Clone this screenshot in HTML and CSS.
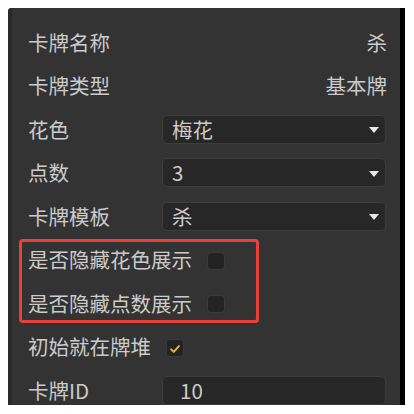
FILE: index.html
```html
<!DOCTYPE html>
<html lang="zh-CN">
<head>
  <meta charset="UTF-8">
  <meta name="viewport" content="width=device-width, initial-scale=1.0">
  <title>卡牌属性</title>
  <link rel="stylesheet" href="styles.css">
</head>
<body>
  <div class="panel">
    <div class="rows">
      <div class="row">
        <div class="row-label">卡牌名称</div>
        <div class="row-value">杀</div>
      </div>
      <div class="row">
        <div class="row-label">卡牌类型</div>
        <div class="row-value">基本牌</div>
      </div>
      <div class="row">
        <div class="row-label field-label">花色</div>
        <div class="select">梅花<span class="select-arrow"></span></div>
      </div>
      <div class="row">
        <div class="row-label field-label">点数</div>
        <div class="select">3<span class="select-arrow"></span></div>
      </div>
      <div class="row">
        <div class="row-label field-label">卡牌模板</div>
        <div class="select">杀<span class="select-arrow"></span></div>
      </div>

      <div class="highlight">
        <div class="row check-row">
          <div class="row-label">是否隐藏花色展示</div>
          <span class="checkbox"></span>
        </div>
        <div class="row check-row">
          <div class="row-label">是否隐藏点数展示</div>
          <span class="checkbox"></span>
        </div>
      </div>

      <div class="row check-row">
        <div class="row-label">初始就在牌堆</div>
        <span class="checkbox checked">
          <svg viewBox="0 0 18 18" width="18" height="18">
            <path d="M4.6 9.4 L7.6 12.2 L13.4 5.8" fill="none" stroke="#f2b32c" stroke-width="2.2" stroke-linecap="round" stroke-linejoin="round"/>
          </svg>
        </span>
      </div>
      <div class="row">
        <div class="row-label field-label">卡牌ID</div>
        <div class="input">10</div>
      </div>
    </div>
  </div>
</body>
</html>
```

FILE: styles.css
```css
body {
  margin: 0;
  padding: 0;
  background-color: #fff;
  font-family: "Noto Sans CJK SC", "Noto Sans", sans-serif;
  color: #cbcbcb;
}

.panel {
  margin: 8px 0 0 8px;
  width: 388px;
  height: 397px;
  background-color: #333;
  border-left: 4px solid #2a2a2a;
  border-right: 5px solid #000;
  border-top-left-radius: 3px;
  overflow: hidden;
}

.rows {
  display: flex;
  flex-direction: column;
  gap: 14.5px;
  padding: 19.5px 13px 0 16px;
}

.row {
  display: flex;
  align-items: center;
  height: 29px;
  font-size: 20.5px;
  line-height: 29px;
}

.row-label {
  white-space: nowrap;
}

.field-label {
  width: 134px;
  flex-shrink: 0;
}

.row-value {
  margin-left: auto;
}

.select,
.input {
  flex: 1;
  height: 29px;
  box-sizing: border-box;
  margin-right: 1px;
  background-color: #272727;
  border: 1px solid #3d3d3d;
  border-radius: 5px;
  padding-left: 9px;
  display: flex;
  align-items: center;
  font-size: 20.5px;
  color: #cbcbcb;
}

.input {
  padding-left: 17px;
}

.select-arrow {
  margin-left: auto;
  margin-right: 6px;
  width: 0;
  height: 0;
  border-left: 5px solid transparent;
  border-right: 5px solid transparent;
  border-top: 6px solid #e8e8e8;
  margin-top: 2px;
}

.check-row {
  gap: 15px;
}

.checkbox {
  width: 18px;
  height: 18px;
  flex-shrink: 0;
  box-sizing: border-box;
  background-color: #232323;
  border: 1px solid #3a3a3a;
  border-radius: 4px;
  display: flex;
  margin-top: 2px;
}

.highlight {
  position: relative;
  display: flex;
  flex-direction: column;
  gap: 14.5px;
}

/* red annotation frame */
.highlight::before {
  content: "";
  position: absolute;
  left: -9px;
  top: -6.5px;
  width: 240px;
  bottom: -5.5px;
  box-sizing: border-box;
  border: 3px solid #e8413c;
  border-radius: 4px;
  pointer-events: none;
}
```
